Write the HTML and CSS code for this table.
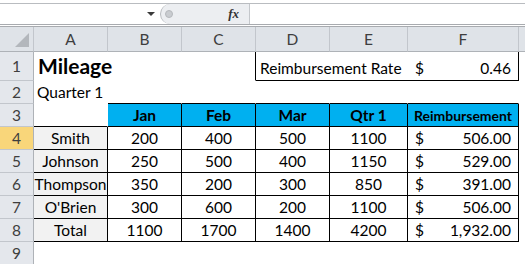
FILE: index.html
```html
<!DOCTYPE html>
<html lang="en">
<head>
    <meta charset="UTF-8">
    <title>Mileage</title>
    <link rel="stylesheet" href="styles.css">
</head>
<body>
    <div class="formula-bar">
        <div class="name-box"><span class="dropdown"></span></div>
        <div class="fx-zone">
            <span class="knob"></span>
            <span class="fx">fx</span>
        </div>
        <div class="formula-input"></div>
    </div>
    <div class="bar-gap"></div>

    <div class="sheet">
        <!-- column headers -->
        <div class="corner"><span class="corner-mark"></span></div>
        <div class="col-head">A</div>
        <div class="col-head">B</div>
        <div class="col-head">C</div>
        <div class="col-head">D</div>
        <div class="col-head">E</div>
        <div class="col-head">F</div>
        <div class="col-head rest"></div>

        <!-- row 1 -->
        <div class="row-head">1</div>
        <div class="cell title span3 edge-r">Mileage</div>
        <div class="cell rate-box span3">
            <span class="rate-label">Reimbursement Rate</span>
            <span class="money"><span>$</span><span>0.46</span></span>
        </div>
        <div class="cell"></div>

        <!-- row 2 -->
        <div class="row-head">2</div>
        <div class="cell subtitle">Quarter 1</div>
        <div class="cell edge-b"></div>
        <div class="cell edge-b"></div>
        <div class="cell edge-b"></div>
        <div class="cell edge-b"></div>
        <div class="cell edge-b"></div>
        <div class="cell"></div>

        <!-- row 3 -->
        <div class="row-head">3</div>
        <div class="cell edge-b"></div>
        <div class="cell boxed head">Jan</div>
        <div class="cell boxed head">Feb</div>
        <div class="cell boxed head">Mar</div>
        <div class="cell boxed head">Qtr 1</div>
        <div class="cell boxed head small">Reimbursement</div>
        <div class="cell"></div>

        <!-- row 4 -->
        <div class="row-head selected">4</div>
        <div class="cell boxed name">Smith</div>
        <div class="cell boxed">200</div>
        <div class="cell boxed">400</div>
        <div class="cell boxed">500</div>
        <div class="cell boxed">1100</div>
        <div class="cell boxed money"><span>$</span><span>506.00</span></div>
        <div class="cell"></div>

        <!-- row 5 -->
        <div class="row-head">5</div>
        <div class="cell boxed name">Johnson</div>
        <div class="cell boxed">250</div>
        <div class="cell boxed">500</div>
        <div class="cell boxed">400</div>
        <div class="cell boxed">1150</div>
        <div class="cell boxed money"><span>$</span><span>529.00</span></div>
        <div class="cell"></div>

        <!-- row 6 -->
        <div class="row-head">6</div>
        <div class="cell boxed name">Thompson</div>
        <div class="cell boxed">350</div>
        <div class="cell boxed">200</div>
        <div class="cell boxed">300</div>
        <div class="cell boxed">850</div>
        <div class="cell boxed money"><span>$</span><span>391.00</span></div>
        <div class="cell"></div>

        <!-- row 7 -->
        <div class="row-head">7</div>
        <div class="cell boxed name">O'Brien</div>
        <div class="cell boxed">300</div>
        <div class="cell boxed">600</div>
        <div class="cell boxed">200</div>
        <div class="cell boxed">1100</div>
        <div class="cell boxed money"><span>$</span><span>506.00</span></div>
        <div class="cell"></div>

        <!-- row 8 -->
        <div class="row-head">8</div>
        <div class="cell boxed name">Total</div>
        <div class="cell boxed">1100</div>
        <div class="cell boxed">1700</div>
        <div class="cell boxed">1400</div>
        <div class="cell boxed">4200</div>
        <div class="cell boxed money"><span>$</span><span>1,932.00</span></div>
        <div class="cell"></div>

        <!-- row 9 -->
        <div class="row-head">9</div>
        <div class="cell"></div>
        <div class="cell"></div>
        <div class="cell"></div>
        <div class="cell"></div>
        <div class="cell"></div>
        <div class="cell"></div>
        <div class="cell"></div>
    </div>
</body>
</html>
```

FILE: styles.css
```css
:root {
    --header-bg: #dfe3e8;
    --row-head-bg: #e4e7ec;
    --header-line: #c2c6cc;
    --selected: #f9d67a;
    --cyan: #00b0f0;
    --name-fill: #f2f2f2;
}

* {
    box-sizing: border-box;
    margin: 0;
    padding: 0;
}

body {
    font-family: Lato, 'Open Sans', sans-serif;
    font-size: 15.5px;
    color: #000;
    background: #fff;
    width: 525px;
    height: 264px;
    overflow: hidden;
}

/* formula bar */
.formula-bar {
    display: flex;
    height: 22px;
    border-top: 1px solid #b9bcc0;
    border-bottom: 1px solid #a8abaf;
    margin-top: 3px;
    background: #fff;
}

.name-box {
    width: 160px;
    position: relative;
}

.dropdown {
    position: absolute;
    right: 5px;
    top: 8px;
    border-left: 4px solid transparent;
    border-right: 4px solid transparent;
    border-top: 4px solid #3a3a3a;
}

.fx-zone {
    width: 90px;
    display: flex;
    align-items: center;
    justify-content: space-between;
    background: #eceef1;
    border-radius: 10px 0 0 10px;
    border-left: 1px solid #b6b9bd;
    border-right: 1px solid #c4c7cb;
    padding: 0 10px 0 4px;
}

.knob {
    width: 8px;
    height: 8px;
    border-radius: 50%;
    background: #c9ccd0;
    border: 1px solid #b5b8bc;
}

.fx {
    font-family: 'Liberation Serif', serif;
    font-style: italic;
    font-weight: bold;
    font-size: 13px;
    color: #333;
}

.formula-input {
    flex: 1;
}

.bar-gap {
    height: 2px;
    border-bottom: 1px solid #a8abaf;
}

/* sheet grid */
.sheet {
    display: grid;
    grid-template-columns: 34px 74px 74px 74px 74px 78px 111px 1fr;
    grid-template-rows: 25px 29px repeat(8, 23px);
}

.corner,
.col-head {
    background: var(--header-bg);
    border-right: 1px solid var(--header-line);
    border-bottom: 1px solid #aeb2b7;
}

.corner {
    position: relative;
}

.corner-mark {
    position: absolute;
    right: 4px;
    bottom: 4px;
    border-left: 14px solid transparent;
    border-bottom: 14px solid #b3b7bc;
}

.col-head {
    display: flex;
    align-items: center;
    justify-content: center;
    color: #3e3e3e;
}

.col-head.rest {
    border-right: none;
}

.row-head {
    background: var(--row-head-bg);
    border-right: 1px solid #aeb2b7;
    border-bottom: 1px solid var(--header-line);
    display: flex;
    align-items: center;
    justify-content: center;
    color: #3e3e3e;
}

.row-head.selected {
    background: var(--selected);
}

.cell {
    border-right: 1px solid transparent;
    border-bottom: 1px solid transparent;
    display: flex;
    align-items: center;
    justify-content: center;
    white-space: nowrap;
}

.span3 {
    grid-column: span 3;
}

.edge-r {
    border-right-color: #000;
}

.edge-b {
    border-bottom-color: #000;
}

.boxed {
    border-right-color: #000;
    border-bottom-color: #000;
}

.title {
    justify-content: flex-start;
    align-items: flex-end;
    padding: 0 0 2px 4px;
    font-weight: bold;
    font-size: 21px;
}

.subtitle {
    justify-content: flex-start;
    padding-left: 3px;
    overflow: visible;
}

.rate-box {
    border-right-color: #000;
    border-bottom-color: #000;
    justify-content: flex-start;
    align-items: flex-end;
    padding-bottom: 3px;
}

.rate-label {
    width: 152px;
    padding-left: 4px;
}

.rate-box .money {
    flex: 1;
}

.head {
    background: var(--cyan);
    font-weight: bold;
}

.head.small {
    font-size: 14px;
}

.name {
    background: var(--name-fill);
}

.money {
    justify-content: space-between;
    display: flex;
    padding: 0 7px;
}
```
